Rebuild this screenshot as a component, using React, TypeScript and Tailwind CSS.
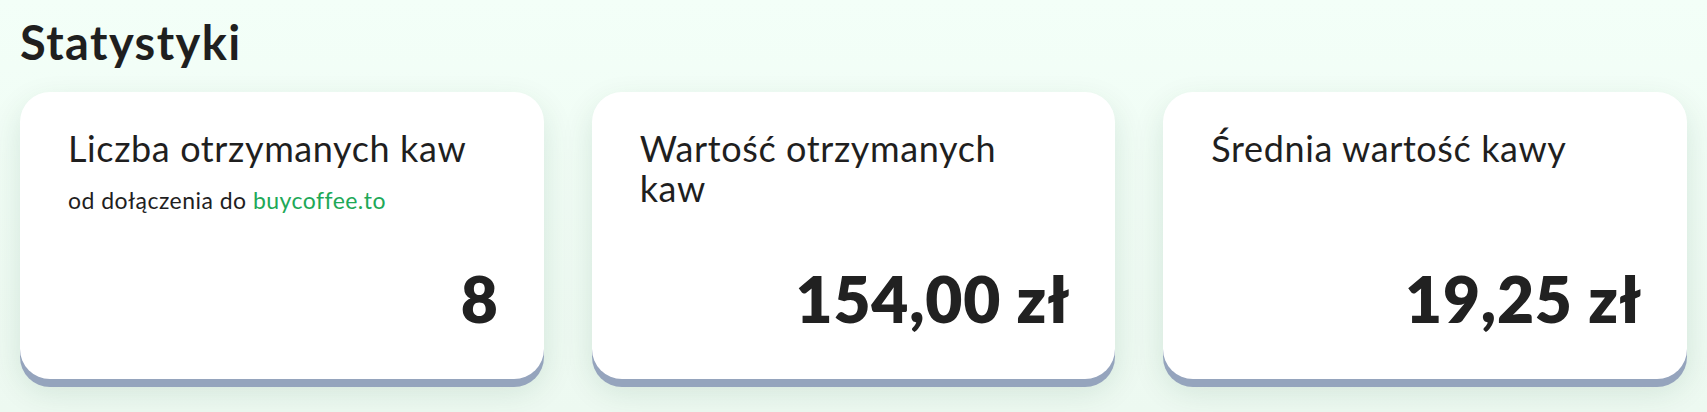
const stats = [
  { title: 'Liczba otrzymanych kaw', sub: true, value: '8' },
  { title: 'Wartość otrzymanych kaw', sub: false, value: '154,00 zł' },
  { title: 'Średnia wartość kawy', sub: false, value: '19,25 zł' },
];

function StatCard({ title, sub, value }: { title: string; sub: boolean; value: string }) {
  return (
    <div className="flex h-[287px] flex-col rounded-[30px] bg-white pl-12 pr-[45px] pt-9 pb-[48px] shadow-[0_8px_0_#95a4bd,0_12px_32px_rgba(20,70,40,0.12)]">
      <h3 className="pr-5 text-[36px] leading-[40px] font-normal tracking-[0.017em] text-[#1f1f1f]">{title}</h3>
      {sub && (
        <p className="mt-[18px] text-[23px] leading-[28px] tracking-[0.02em] text-[#1f1f1f]">
          od dołączenia do <span className="text-[#20a857]">buycoffee.to</span>
        </p>
      )}
      <div className="mt-auto text-right text-[64px] leading-none font-extrabold tracking-[0.012em] text-[#212121]">
        {value}
      </div>
    </div>
  );
}

export default function App() {
  return (
    <div className="min-h-[412px] bg-gradient-to-b from-[#f3fff8] to-[#edf9f1] px-5 pt-3 font-['Lato',sans-serif]">
      <h2 className="text-[47px] leading-[60px] font-bold tracking-[0.03em] text-[#1f1f1f]">Statystyki</h2>
      <div className="mt-5 grid grid-cols-3 gap-12">
        {stats.map((s) => (
          <StatCard key={s.title} {...s} />
        ))}
      </div>
    </div>
  );
}
